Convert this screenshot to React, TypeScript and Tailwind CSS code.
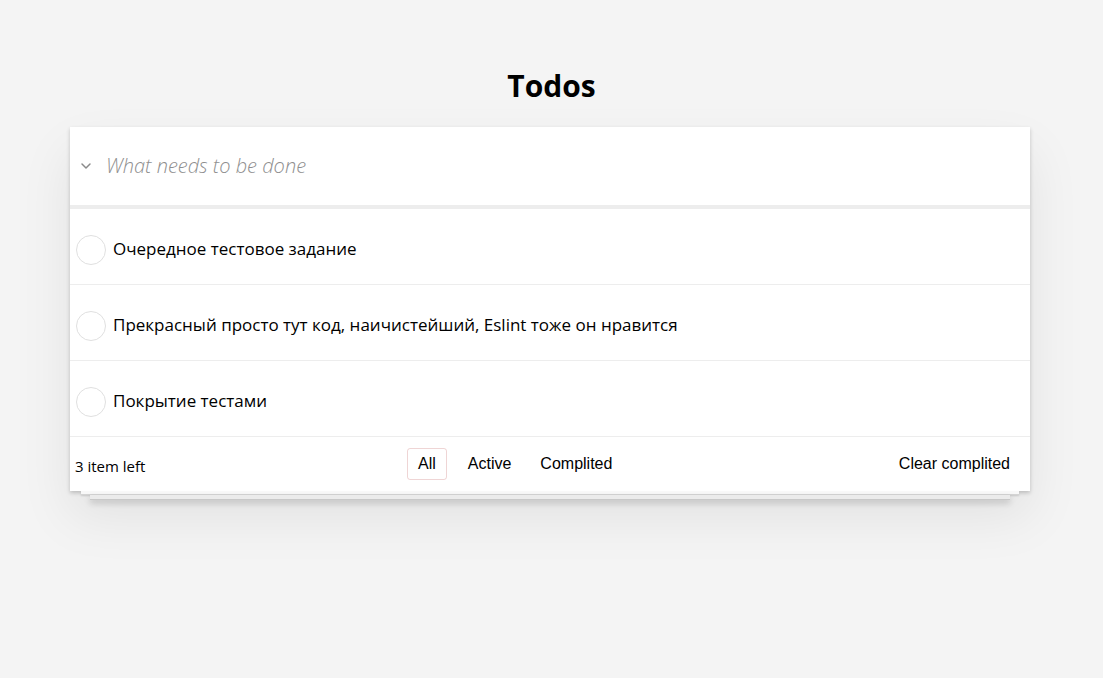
import { ChevronDown } from "lucide-react";

const todos = [
  "Очередное тестовое задание",
  "Прекрасный просто тут код, наичистейший, Eslint тоже он нравится",
  "Покрытие тестами",
];

export default function App() {
  return (
    <div className="min-h-screen bg-[#f4f4f4] pt-[66px] font-['Open_Sans','Noto_Sans',sans-serif] text-black">
      <h1 className="text-center text-[30px] font-bold leading-[40px]">Todos</h1>

      <div className="ml-[70px] mt-[21px] w-[960px]">
        <section className="bg-white shadow-[0_2px_4px_rgba(0,0,0,0.2),0_25px_50px_rgba(0,0,0,0.08)]">
          {/* Header */}
          <div className="flex h-[82px] items-center border-b-4 border-[#ededed] pl-[8px]">
            <ChevronDown className="h-[16px] w-[16px] text-[#8a8a8a]" strokeWidth={2.2} />
            <input
              className="ml-[12px] flex-1 bg-transparent text-[20px] italic font-light outline-none placeholder:text-[#8f8f8f]"
              placeholder="What needs to be done"
            />
          </div>

          {/* List */}
          <ul>
            {todos.map((t) => (
              <li key={t} className="flex h-[76px] items-center border-b border-[#ededed] pl-[6px] pt-[4px]">
                <span className="mt-[2px] h-[30px] w-[30px] rounded-full border border-[#e0e0e0]" />
                <span className="ml-[7px] text-[17px]">{t}</span>
              </li>
            ))}
          </ul>

          {/* Footer */}
          <div className="flex h-[54px] items-center pl-[5px] pr-[13px]">
            <span className="mt-[4px] w-[332px] text-[15px]">3 item left</span>
            <div className="flex items-center gap-[13px] font-['Liberation_Sans',Arial,sans-serif] text-[16px]">
              <button className="rounded-[3px] border border-[rgba(175,47,47,0.2)] px-[10px] py-[3px]">All</button>
              <button className="rounded-[3px] border border-transparent px-[7px] py-[3px]">Active</button>
              <button className="rounded-[3px] border border-transparent px-[7px] py-[3px]">Complited</button>
            </div>
            <button className="ml-auto px-[7px] py-[3px] font-['Liberation_Sans',Arial,sans-serif] text-[16px]">Clear complited</button>
          </div>
        </section>

        {/* Stacked paper layers */}
        <div className="mx-[11px] h-[4px] border-b border-[#d4d4d4] bg-[#f8f8f8] shadow-[0_1px_2px_rgba(0,0,0,0.12)]" />
        <div className="mx-[20px] h-[5px] border-b border-[#c8c8c8] bg-[#ebebeb] shadow-[0_3px_6px_rgba(0,0,0,0.18)]" />
      </div>
    </div>
  );
}
